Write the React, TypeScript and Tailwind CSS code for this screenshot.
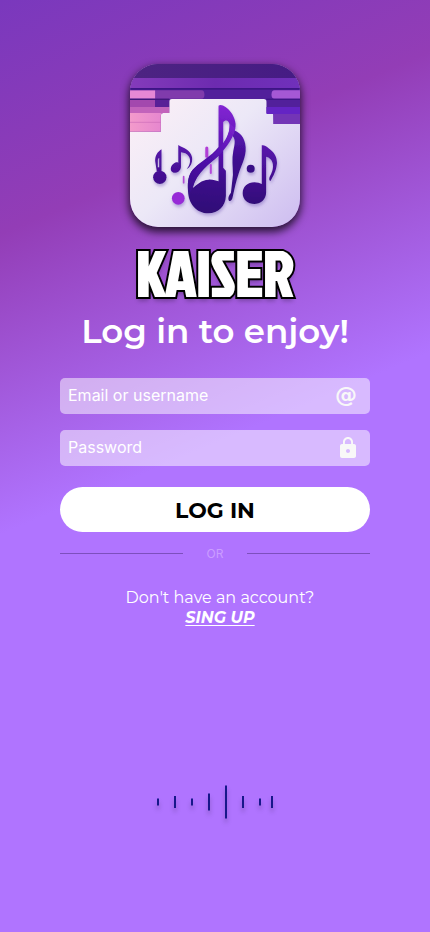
import { MdLock } from "react-icons/md";

function AppLogo() {
  return (
    <svg
      viewBox="30 27 507 489"
      role="img"
      aria-label="Kaiser music notes"
      preserveAspectRatio="none"
      className="h-[163px] w-[170px] rounded-[28px] shadow-[0_4px_8px_1px_rgba(0,0,0,0.75)]"
    >
      <defs>
        <linearGradient id="paper" x1="0" y1="0" x2="1" y2="1">
          <stop offset="0.1" stopColor="#fdf0f6" />
          <stop offset="0.5" stopColor="#ece8f7" />
          <stop offset="1" stopColor="#cdbcf0" />
        </linearGradient>
        <linearGradient id="sky" x1="0" y1="0" x2="1" y2="0">
          <stop offset="0" stopColor="#4d2482" />
          <stop offset="1" stopColor="#451b84" />
        </linearGradient>
        <linearGradient id="band" x1="0" y1="0" x2="1" y2="0">
          <stop offset="0" stopColor="#843bbb" />
          <stop offset="0.5" stopColor="#6d2bb0" />
          <stop offset="1" stopColor="#7030bb" />
        </linearGradient>
        <linearGradient id="rose" x1="0" y1="0" x2="1" y2="0">
          <stop offset="0" stopColor="#f39acb" />
          <stop offset="1" stopColor="#e585cf" />
        </linearGradient>
        <linearGradient id="ink" gradientUnits="userSpaceOnUse" x1="320" y1="150" x2="300" y2="470">
          <stop offset="0" stopColor="#8426d4" />
          <stop offset="0.4" stopColor="#5c12b4" />
          <stop offset="0.72" stopColor="#3c0d8a" />
          <stop offset="1" stopColor="#300b78" />
        </linearGradient>
        <linearGradient id="ribbon" gradientUnits="userSpaceOnUse" x1="345" y1="220" x2="220" y2="420">
          <stop offset="0" stopColor="#7a22cc" />
          <stop offset="0.45" stopColor="#5412b0" />
          <stop offset="1" stopColor="#390d8a" />
        </linearGradient>
        <linearGradient id="tail" gradientUnits="userSpaceOnUse" x1="350" y1="225" x2="335" y2="438">
          <stop offset="0" stopColor="#5c16b4" />
          <stop offset="0.4" stopColor="#3f0e90" />
          <stop offset="1" stopColor="#330b7c" />
        </linearGradient>
        <linearGradient id="small" gradientUnits="userSpaceOnUse" x1="0" y1="265" x2="0" y2="450">
          <stop offset="0" stopColor="#5a16ae" />
          <stop offset="1" stopColor="#310a78" />
        </linearGradient>
        <filter id="lift" x="-20%" y="-20%" width="140%" height="150%">
          <feDropShadow dx="2" dy="7" stdDeviation="5" floodColor="#7e62bd" floodOpacity="0.5" />
        </filter>
      </defs>

      <rect x="30" y="27" width="507" height="489" fill="url(#paper)" />
      <path d="M30 27H537V207H458V180Q458 174 452 174H437V140Q437 132 429 132H155Q147 132 147 140V174H130Q122 174 122 182V230H30Z" fill="#52209b" />
      <rect x="30" y="27" width="507" height="42" fill="url(#sky)" />
      <rect x="30" y="69" width="507" height="30" fill="url(#band)" />
      <rect x="30" y="99" width="507" height="5" fill="#3d1585" />
      <path d="M105 106H243Q252 106 252 119Q252 131 243 131H105Z" fill="#803bac" />
      <rect x="30" y="106" width="75" height="25" fill="#e688d5" />
      <path d="M537 106H461Q452 106 452 119Q452 131 461 131H537Z" fill="#a558d5" />
      <rect x="30" y="131" width="117" height="4" fill="#401779" />
      <rect x="30" y="135" width="75" height="21" fill="#a348ae" />
      <rect x="105" y="135" width="42" height="21" fill="#582097" />
      <rect x="30" y="156" width="117" height="18" fill="#c263bb" />
      <path d="M30 174H130Q122 174 122 182V230H30Z" fill="url(#rose)" />
      <path d="M30 202H122" stroke="#ce6eb8" strokeWidth="2" />
      <rect x="437" y="131" width="100" height="4" fill="#3d1585" />
      <rect x="437" y="156" width="100" height="21" fill="#6424c4" />
      <path d="M457 177H537V207H458Z" fill="#7335b6" />

      <g filter="url(#lift)">
        <path d="M259 279V304" stroke="#b13cd6" strokeWidth="9" strokeLinecap="round" />
        <path d="M271 330V354" stroke="#b549dc" strokeWidth="6" strokeLinecap="round" />
        <path d="M190 365V383" stroke="#b24bd5" strokeWidth="5" strokeLinecap="round" />
        <circle cx="174" cy="430" r="19" fill="#972bd7" />

        <circle cx="119" cy="367" r="20" fill="url(#small)" />
        <path d="M124 283C112 291 105 301 105 318L110 350H124ZM117 309V337H113V314Q114 309 117 309Z" fill="url(#small)" fillRule="evenodd" />

        <path d="M174 270C190 280 211 284 215 307C217 323 211 336 199 343C209 330 213 315 205 304C200 296 191 293 182 292V337C180 350 169 355 160 353C149 350 149 335 159 327C164 322 170 321 174 323Z" fill="url(#small)" />

        <path d="M340 226C364 234 377 258 375 288C372 315 362 332 354 356C346 380 342 400 337 423C335 435 330 440 325 437C321 430 325 420 331 413L337 359C337 335 333 312 338 288C343 266 345 252 336 244Z" fill="url(#tail)" />
        <path d="M294 152C299 148 308 151 315 156C331 167 343 187 345 207C346 232 330 252 308 283V338L316 347V423C315 454 293 474 264 475C227 475 204 445 203 408C200 377 207 353 223 338C242 319 273 303 294 276ZM308 201V267C322 248 327 234 327 210C326 196 315 192 308 201ZM294 303C271 324 229 351 217 399C231 388 243 375 264 374C277 373 287 378 294 379Z" fill="url(#ink)" fillRule="evenodd" />
        <path d="M344 220C339 247 321 276 293 303C264 329 232 346 217 398L207 417C198 386 203 354 225 337C248 317 276 305 298 278C313 257 327 239 328 207Z" fill="url(#ribbon)" />

        <circle cx="390" cy="341" r="12" fill="#390c86" />
        <path d="M423 271C433 268 440 278 449 284C462 294 470 310 468 328C466 347 457 365 449 378C442 375 446 365 451 356C459 339 458 322 449 313Q443 306 436 305V412C436 435 419 447 401 447C381 447 366 434 366 415C366 395 381 382 401 382Q415 382 423 387Z" fill="url(#small)" />
      </g>
    </svg>
  );
}

const bars = [
  { x: 0, h: 7 },
  { x: 17, h: 12 },
  { x: 34, h: 7 },
  { x: 51, h: 17 },
  { x: 68, h: 33 },
  { x: 85, h: 12 },
  { x: 102, h: 7 },
  { x: 114, h: 12 },
];

function SoundWave() {
  return (
    <svg
      viewBox="0 0 116 34"
      aria-hidden="true"
      className="h-[34px] w-[116px] overflow-visible drop-shadow-[0_4px_2px_rgba(0,0,0,0.25)]"
    >
      {bars.map((bar) => (
        <rect key={bar.x} x={bar.x} y={17 - bar.h / 2} width="2" height={bar.h} fill="#17178a" />
      ))}
    </svg>
  );
}

const fieldClass =
  "block h-9 w-full rounded-[5px] bg-white/50 pb-0.5 pl-2 pr-11 font-['Inter',sans-serif] text-base text-white outline-none placeholder:text-white placeholder:opacity-100";

export default function App() {
  return (
    <main className="flex min-h-screen flex-col items-center bg-[linear-gradient(157deg,#7a38bd_0%,#933db6_21%,#b074ff_48%)] px-[60px] pt-16 pb-28 font-['Montserrat','Inter',sans-serif] text-white">
      <AppLogo />
      <h1 className="mt-[14px] text-center font-['Jockey_One','Open_Sans_Condensed',sans-serif] text-[63px] leading-[62px] font-bold text-white [-webkit-text-stroke:4px_black] [paint-order:stroke_fill] [text-shadow:0_4px_4px_rgba(0,0,0,0.25)]">
        KAISER
      </h1>
      <p className="mt-[6px] text-center text-[34px] leading-[44px] font-semibold whitespace-nowrap">Log in to enjoy!</p>

      <form className="mt-[25px] w-full" onSubmit={(event) => event.preventDefault()}>
        <div className="relative">
          <input id="user" type="text" aria-label="Email or username" placeholder="Email or username" className={fieldClass} />
          <label
            htmlFor="user"
            className="absolute inset-y-0 right-3 flex w-6 items-center justify-center pb-0.5 font-['DejaVu_Sans',sans-serif] text-[22px] leading-8 font-bold text-[#f8f8f8]"
          >
            @
          </label>
        </div>
        <div className="relative mt-4">
          <input id="password" type="password" aria-label="Password" placeholder="Password" className={fieldClass} />
          <label htmlFor="password" className="absolute inset-y-0 right-[10px] flex items-center text-[#f8f8f8]">
            <MdLock size={24} />
          </label>
        </div>
        <button type="submit" className="mt-[21px] block h-[45px] w-full rounded-full bg-white pt-px text-[22px] font-bold text-black">
          LOG IN
        </button>
      </form>

      <div className="mt-3 flex w-full items-center">
        <span className="h-px flex-1 bg-[#7d4fbd]" />
        <span className="w-16 pt-0.5 text-center font-['Inter',sans-serif] text-xs leading-4 text-[#cb9dff]">OR</span>
        <span className="h-px flex-1 bg-[#7d4fbd]" />
      </div>

      <div className="mt-[26px] pl-[10px] text-center text-base leading-5">
        <p className="font-normal">Don't have an account?</p>
        <a href="#signup" className="font-bold italic underline underline-offset-2">
          SING UP
        </a>
      </div>

      <div className="mt-[157px]">
        <SoundWave />
      </div>
    </main>
  );
}
